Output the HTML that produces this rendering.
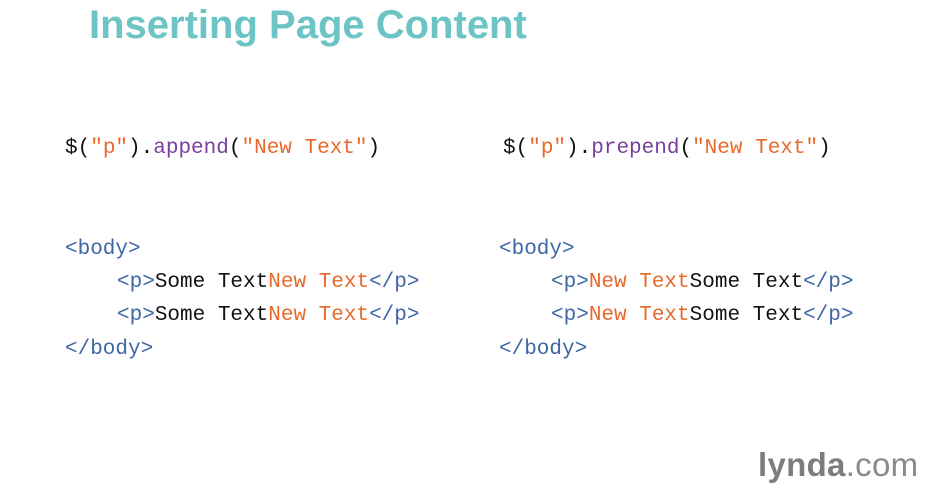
<!DOCTYPE html>
<html><head><style>
body{margin:0;width:930px;height:489px;background:#fff;position:relative;overflow:hidden}
.t{position:absolute;left:89px;top:3px;font-family:"Liberation Sans",sans-serif;font-weight:bold;font-size:40px;color:#6cc4c4;white-space:nowrap}
.c{position:absolute;font-family:"Liberation Mono","DejaVu Sans Mono",monospace;font-size:21px;white-space:pre;color:#111;line-height:24px}
.b{color:#3f67a6}.o{color:#e8692b}.p{color:#7b3f9b}
.logo{position:absolute;left:758px;top:446px;font-family:"Liberation Sans",sans-serif;font-size:33px;color:#8a8a8a;letter-spacing:0.3px}
</style></head><body>
<div class="t">Inserting Page Content</div>
<div class="c" style="left:65px;top:137px">$(<span class="o">"p"</span>).<span class="p">append</span>(<span class="o">"New Text"</span>)</div>
<div class="c" style="left:503px;top:137px">$(<span class="o">"p"</span>).<span class="p">prepend</span>(<span class="o">"New Text"</span>)</div>
<div class="c" style="left:65px;top:238px"><span class="b">&lt;body&gt;</span></div>
<div class="c" style="left:117px;top:271px"><span class="b">&lt;p&gt;</span>Some Text<span class="o">New Text</span><span class="b">&lt;/p&gt;</span></div>
<div class="c" style="left:117px;top:304px"><span class="b">&lt;p&gt;</span>Some Text<span class="o">New Text</span><span class="b">&lt;/p&gt;</span></div>
<div class="c" style="left:65px;top:338px"><span class="b">&lt;/body&gt;</span></div>
<div class="c" style="left:499px;top:238px"><span class="b">&lt;body&gt;</span></div>
<div class="c" style="left:551px;top:271px"><span class="b">&lt;p&gt;</span><span class="o">New Text</span>Some Text<span class="b">&lt;/p&gt;</span></div>
<div class="c" style="left:551px;top:304px"><span class="b">&lt;p&gt;</span><span class="o">New Text</span>Some Text<span class="b">&lt;/p&gt;</span></div>
<div class="c" style="left:499px;top:338px"><span class="b">&lt;/body&gt;</span></div>
<div class="logo"><b style="color:#7d7d7d">lynda</b>.com</div>
</body></html>
